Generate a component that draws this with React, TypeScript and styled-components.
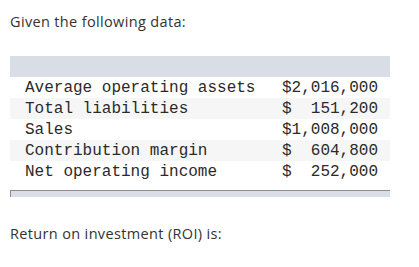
import React from "react";
import styled, { createGlobalStyle } from "styled-components";

const Global = createGlobalStyle`
  html, body { margin: 0; padding: 0; background: #fff; }
  body { font-family: "Open Sans", Lato, sans-serif; color: #333; }
`;

const Page = styled.div`
  width: 419px;
  height: 267px;
  padding: 13px 10px 0 10px;
  box-sizing: border-box;
  display: flex;
  flex-direction: column;
`;

const Prompt = styled.p<{ $top?: number }>`
  margin: 0;
  margin-top: ${(p) => p.$top ?? 0}px;
  font-size: 14.5px;
  letter-spacing: 0.35px;
  line-height: 18px;
  color: #333;
`;

const Table = styled.div`
  width: 380px;
  margin-top: 25px;
  display: flex;
  flex-direction: column;
`;

const HeadBand = styled.div`
  height: 21px;
  background: #d9dde6;
`;

const Row = styled.div<{ $alt?: boolean }>`
  height: 21px;
  display: flex;
  align-items: center;
  justify-content: space-between;
  padding: 0 12px 0 15px;
  background: ${(p) => (p.$alt ? "#f6f6f6" : "#fff")};
  font-family: "Liberation Mono", "Courier New", monospace;
  font-size: 16px;
  color: #2a2a2a;
  white-space: pre;
`;

const Spacer = styled.div`
  height: 8px;
`;

const FootBand = styled.div`
  height: 6px;
  background: #d9dde6;
  border-top: 1px solid #8e8e8e;
  border-left: 1px solid #8e8e8e;
`;

const rows: [string, string][] = [
  ["Average operating assets", "$2,016,000"],
  ["Total liabilities", "$  151,200"],
  ["Sales", "$1,008,000"],
  ["Contribution margin", "$  604,800"],
  ["Net operating income", "$  252,000"],
];

export default function App() {
  return (
    <Page>
      <Global />
      <Prompt>Given the following data:</Prompt>
      <Table>
        <HeadBand />
        {rows.map(([label, value], i) => (
          <Row key={label} $alt={i % 2 === 1}>
            <span>{label}</span>
            <span>{value}</span>
          </Row>
        ))}
        <Spacer />
        <FootBand />
      </Table>
      <Prompt $top={28}>Return on investment (ROI) is:</Prompt>
    </Page>
  );
}
